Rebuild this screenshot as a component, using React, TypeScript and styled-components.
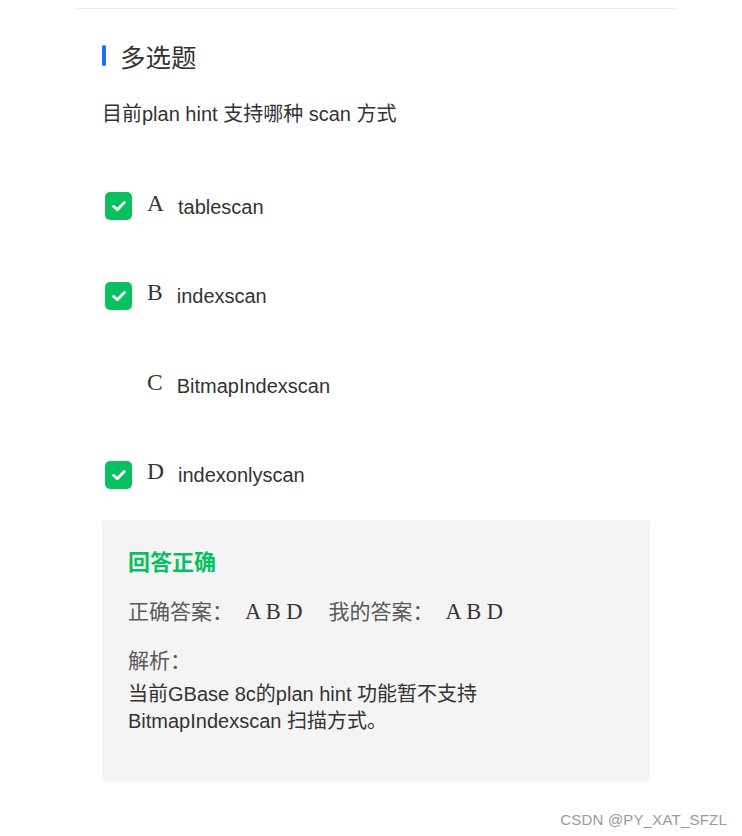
import React from "react";
import styled, { createGlobalStyle } from "styled-components";

const GlobalStyle = createGlobalStyle`
  html, body {
    margin: 0;
    padding: 0;
    background: #fff;
  }
  body {
    font-family: "Liberation Sans", "Noto Sans CJK SC", sans-serif;
    color: #333;
  }
`;

const Page = styled.div`
  position: relative;
  width: 742px;
  height: 836px;
  padding-top: 8px;
  box-sizing: border-box;
`;

const Card = styled.div`
  margin-left: 75px;
  width: 601px;
  border-top: 1px solid #ececec;
  padding: 0 26px 0 27px;
  box-sizing: border-box;
`;

const Title = styled.div`
  display: flex;
  align-items: center;
  margin-top: 30px;
  height: 32px;
  font-size: 25.5px;
  color: #333;
  &::before {
    content: "";
    width: 4px;
    height: 21px;
    border-radius: 2px;
    background: #1a6dff;
    margin-right: 14px;
  }
`;

const Question = styled.div`
  margin-top: 29px;
  font-size: 20px;
  line-height: 28px;
`;

const Options = styled.div`
  display: flex;
  flex-direction: column;
  gap: 61.5px;
  margin-top: 64px;
`;

const Option = styled.div`
  display: flex;
  align-items: center;
  height: 28px;
  padding-left: 3px;
`;

const Check = styled.span<{ $on: boolean }>`
  width: 27px;
  height: 28px;
  border-radius: 5px;
  background: ${(p) => (p.$on ? "#07c160" : "transparent")};
  display: flex;
  align-items: center;
  justify-content: center;
  margin-right: 15px;
  flex-shrink: 0;
`;

const Label = styled.span`
  display: inline-flex;
  align-items: baseline;
`;

const Letter = styled.span`
  font-family: "Liberation Serif", serif;
  font-size: 23.5px;
  margin-right: 14px;
  position: relative;
  top: -3px;
`;

const OptText = styled.span`
  font-size: 20px;
`;

const Result = styled.div`
  margin-top: 31.5px;
  background: #f4f4f4;
  border-radius: 4px;
  padding: 28px 26px 46px;
`;

const Verdict = styled.div`
  color: #07c160;
  font-weight: bold;
  font-size: 22px;
  line-height: 30px;
`;

const AnswerLine = styled.div`
  margin-top: 19px;
  font-size: 21px;
  line-height: 30px;
  color: #5a5a5a;
  display: flex;
  align-items: baseline;
`;

const AnsLetters = styled.span<{ $gap?: number }>`
  font-family: "Liberation Serif", serif;
  font-size: 22.5px;
  color: #333;
  margin-left: 12px;
  margin-right: ${(p) => p.$gap ?? 0}px;
`;

const Heading = styled.div`
  margin-top: 19px;
  font-size: 21px;
  line-height: 30px;
  color: #5a5a5a;
`;

const Explain = styled.div`
  margin-top: 4.5px;
  font-size: 20px;
  line-height: 27px;
  color: #333;
  width: 380px;
`;

const Watermark = styled.div`
  position: absolute;
  right: 15px;
  bottom: 8px;
  font-size: 15px;
  color: #9a9a9a;
  letter-spacing: 0.2px;
`;

function Tick() {
  return (
    <svg width="18" height="18" viewBox="0 0 18 18">
      <path
        d="M3.6 9.4 L7.3 12.8 L14.3 5.6"
        fill="none"
        stroke="#fff"
        strokeWidth="2.8"
        strokeLinecap="round"
        strokeLinejoin="round"
      />
    </svg>
  );
}

const options = [
  { key: "A", text: "tablescan", on: true },
  { key: "B", text: "indexscan", on: true },
  { key: "C", text: "BitmapIndexscan", on: false },
  { key: "D", text: "indexonlyscan", on: true },
];

export default function App() {
  return (
    <Page>
      <GlobalStyle />
      <Card>
        <Title>多选题</Title>
        <Question>目前plan hint 支持哪种 scan 方式</Question>
        <Options>
          {options.map((o) => (
            <Option key={o.key}>
              <Check $on={o.on}>{o.on && <Tick />}</Check>
              <Label>
                <Letter>{o.key}</Letter>
                <OptText>{o.text}</OptText>
              </Label>
            </Option>
          ))}
        </Options>
        <Result>
          <Verdict>回答正确</Verdict>
          <AnswerLine>
            正确答案：<AnsLetters $gap={26}>A B D</AnsLetters>
            我的答案：<AnsLetters>A B D</AnsLetters>
          </AnswerLine>
          <Heading>解析：</Heading>
          <Explain>
            当前GBase 8c的plan hint 功能暂不支持
            <br />
            BitmapIndexscan 扫描方式。
          </Explain>
        </Result>
      </Card>
      <Watermark>CSDN @PY_XAT_SFZL</Watermark>
    </Page>
  );
}
